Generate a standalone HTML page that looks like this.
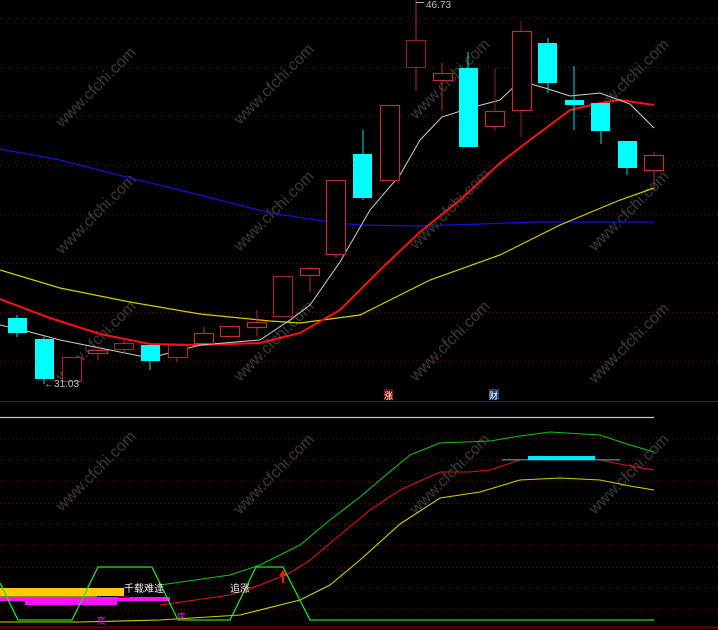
<!DOCTYPE html>
<html><head><meta charset="utf-8"><style>
html,body{margin:0;padding:0;background:#000;width:718px;height:630px;overflow:hidden}
svg{display:block}
text{font-family:"Liberation Sans","Noto Sans CJK SC",sans-serif}
</style></head><body>
<svg width="718" height="630" viewBox="0 0 718 630" xmlns="http://www.w3.org/2000/svg">
<rect width="718" height="630" fill="#000"/>
<g stroke="#7a0000" stroke-width="1" stroke-dasharray="1,3">
<line x1="0" y1="18.5" x2="718" y2="18.5"/><line x1="0" y1="67.5" x2="718" y2="67.5"/>
<line x1="0" y1="116.5" x2="718" y2="116.5"/><line x1="0" y1="165.5" x2="718" y2="165.5"/>
<line x1="0" y1="214.5" x2="718" y2="214.5"/><line x1="0" y1="263.5" x2="718" y2="263.5"/>
<line x1="0" y1="312.5" x2="718" y2="312.5"/><line x1="0" y1="361.5" x2="718" y2="361.5"/>
<line x1="0" y1="438.5" x2="718" y2="438.5"/><line x1="0" y1="460.5" x2="718" y2="460.5"/>
<line x1="0" y1="481.5" x2="718" y2="481.5"/><line x1="0" y1="503.5" x2="718" y2="503.5"/>
<line x1="0" y1="524.5" x2="718" y2="524.5"/><line x1="0" y1="545.5" x2="718" y2="545.5"/>
<line x1="0" y1="567.5" x2="718" y2="567.5"/><line x1="0" y1="588.5" x2="718" y2="588.5"/>
<line x1="0" y1="609.5" x2="718" y2="609.5"/>
</g>
<line x1="0" y1="401.5" x2="718" y2="401.5" stroke="#900000"/>
<line x1="0" y1="417.5" x2="654" y2="417.5" stroke="#c8c8c8" stroke-width="1.2"/>
<line x1="0" y1="627.5" x2="718" y2="627.5" stroke="#700000" stroke-width="2"/>

<g fill="#3c3c3c" font-size="16">
<text transform="translate(62,128) rotate(-45)">www.cfchi.com</text>
<text transform="translate(240,125) rotate(-45)">www.cfchi.com</text>
<text transform="translate(416,120) rotate(-45)">www.cfchi.com</text>
<text transform="translate(595,120) rotate(-45)">www.cfchi.com</text>
<text transform="translate(62,255) rotate(-45)">www.cfchi.com</text>
<text transform="translate(240,252) rotate(-45)">www.cfchi.com</text>
<text transform="translate(416,250) rotate(-45)">www.cfchi.com</text>
<text transform="translate(595,252) rotate(-45)">www.cfchi.com</text>
<text transform="translate(62,382) rotate(-45)">www.cfchi.com</text>
<text transform="translate(240,382) rotate(-45)">www.cfchi.com</text>
<text transform="translate(416,382) rotate(-45)">www.cfchi.com</text>
<text transform="translate(595,384) rotate(-45)">www.cfchi.com</text>
<text transform="translate(62,512) rotate(-45)">www.cfchi.com</text>
<text transform="translate(240,515) rotate(-45)">www.cfchi.com</text>
<text transform="translate(416,515) rotate(-45)">www.cfchi.com</text>
<text transform="translate(595,515) rotate(-45)">www.cfchi.com</text>
</g>

<!-- MAs -->
<polyline fill="none" stroke="#1010e0" stroke-width="1.3" points="0,149 60,160 130,178 200,195 270,213 330,222 360,225 420,226 480,224 540,222 600,222 654,222"/>
<polyline fill="none" stroke="#d0d000" stroke-width="1.2" points="0,270 60,288 130,302 200,314 270,321 300,323 360,315 400,295 430,280 500,255 560,225 620,200 654,188"/>
<polyline fill="none" stroke="#ff1010" stroke-width="2" points="0,299 50,318 100,334 150,344 200,345 260,343 300,333 340,310 380,270 420,232 460,200 500,163 530,140 570,110 600,103 620,100 654,105"/>
<polyline fill="none" stroke="#d0d0d0" stroke-width="1" points="0,325 30,332 60,340 100,348 150,358 200,345 260,340 290,320 310,305 340,262 370,210 400,175 420,140 442,117 470,108 500,100 520,81 545,88 570,96 600,93 630,104 654,128"/>

<!-- candles: wicks -->
<g stroke-width="1">
<line x1="17" y1="315" x2="17" y2="337" stroke="#00dede"/>
<line x1="44" y1="337" x2="44" y2="384" stroke="#00dede"/>
<line x1="124" y1="340" x2="124" y2="353" stroke="#b03030"/>
<line x1="98" y1="346" x2="98" y2="360" stroke="#b03030"/>
<line x1="150" y1="345" x2="150" y2="370" stroke="#00dede"/>
<line x1="177" y1="345" x2="177" y2="362" stroke="#b03030"/>
<line x1="204" y1="327" x2="204" y2="343" stroke="#b03030"/>
<line x1="257" y1="310" x2="257" y2="336" stroke="#b03030"/>
<line x1="310" y1="267" x2="310" y2="292" stroke="#b03030"/>
<line x1="336" y1="254" x2="336" y2="258" stroke="#b03030"/>
<line x1="363" y1="130" x2="363" y2="200" stroke="#00dede"/>
<line x1="416" y1="0" x2="416" y2="91" stroke="#b03030"/>
<line x1="442" y1="63" x2="442" y2="111" stroke="#b03030"/>
<line x1="468" y1="52" x2="468" y2="147" stroke="#00dede"/>
<line x1="495" y1="68" x2="495" y2="131" stroke="#8a2020"/>
<line x1="521" y1="21" x2="521" y2="137" stroke="#8a2020"/>
<line x1="548" y1="38" x2="548" y2="93" stroke="#00dede"/>
<line x1="574" y1="66" x2="574" y2="130" stroke="#00dede"/>
<line x1="601" y1="103" x2="601" y2="144" stroke="#00dede"/>
<line x1="627" y1="141" x2="627" y2="175" stroke="#00dede"/>
<line x1="654" y1="152" x2="654" y2="190" stroke="#b03030"/>
</g>
<g fill="#00ffff">
<rect x="8" y="318" width="19" height="15"/>
<rect x="35" y="339" width="19" height="40"/>
<rect x="141" y="345" width="19" height="16"/>
<rect x="353" y="154" width="19" height="44"/>
<rect x="459" y="68" width="19" height="79"/>
<rect x="538" y="43" width="19" height="40"/>
<rect x="565" y="100" width="19" height="5"/>
<rect x="591" y="103" width="19" height="28"/>
<rect x="618" y="141" width="19" height="27"/>
</g>
<g fill="#000" stroke="#c03030" stroke-width="1.2">
<rect x="62.5" y="357.5" width="19" height="24" stroke="#a02828"/>
<rect x="88.5" y="350.5" width="19" height="3"/>
<rect x="114.5" y="343.5" width="19" height="6" stroke="#a02828"/>
<rect x="168.5" y="345.5" width="19" height="12" stroke="#a02828"/>
<rect x="194.5" y="333.5" width="19" height="10"/>
<rect x="220.5" y="326.5" width="19" height="10"/>
<rect x="247.5" y="322.5" width="19" height="5"/>
<rect x="273.5" y="276.5" width="19" height="40" stroke="#a02828"/>
<rect x="300.5" y="268.5" width="19" height="7"/>
<rect x="326.5" y="180.5" width="19" height="74"/>
<rect x="380.5" y="105.5" width="19" height="75"/>
<rect x="406.5" y="40.5" width="19" height="27" stroke="#8a2020"/>
<rect x="433.5" y="73.5" width="19" height="7"/>
<rect x="485.5" y="111.5" width="19" height="15"/>
<rect x="512.5" y="31.5" width="19" height="79"/>
<rect x="644.5" y="155.5" width="19" height="15"/>
</g>
<line x1="416" y1="2.5" x2="424" y2="2.5" stroke="#aaa"/>
<text x="426" y="8" font-size="10" fill="#c0c0c0">46.73</text>
<text x="44" y="387" font-size="10" fill="#c0c0c0">←31.03</text>

<!-- labels -->
<rect x="384" y="389" width="9" height="11" fill="#800000"/>
<text x="384" y="399" font-size="9" fill="#fff">涨</text>
<rect x="489" y="389" width="10" height="11" fill="#1a3f70"/>
<text x="489" y="399" font-size="9" fill="#fff">财</text>

<!-- lower panel -->
<polyline fill="none" stroke="#10c010" stroke-width="1.1" points="160,585 230,575 260,565 300,545 330,520 360,497 380,480 410,455 440,443 490,441 520,436 550,432 600,435 630,445 654,452"/>
<polyline fill="none" stroke="#e01010" stroke-width="1.1" points="160,605 230,595 260,585 290,573 310,560 340,535 370,510 400,490 440,472 470,472 490,470 520,460 600,460 630,466 654,470"/>
<polyline fill="none" stroke="#d0d000" stroke-width="1.1" points="0,622 80,622 160,620 240,615 300,600 330,585 360,560 400,524 440,498 480,492 520,480 560,478 600,480 630,486 654,490"/>
<rect x="502" y="459" width="118" height="1.5" fill="#1a8a8a"/>
<rect x="528" y="456" width="67" height="4" fill="#00e8f0"/>
<rect x="0" y="588" width="124" height="8" fill="#ffcc00"/>
<rect x="0" y="596" width="97" height="2" fill="#a08800"/>
<rect x="0" y="597" width="170" height="4" fill="#ff10ff"/>
<rect x="25" y="601" width="92" height="4" fill="#ff10ff"/>
<rect x="118" y="596" width="12" height="2" fill="#800000"/>
<polyline fill="none" stroke="#20e020" stroke-width="1.3" points="0,583 18,620 72,620 98,567 152,567 178,620 230,620 256,567 283,567 310,620 654,620"/>
<text x="124" y="592" font-size="10" fill="#f0f0f0">千载难逢</text>
<text x="230" y="592" font-size="10" fill="#f0f0f0">追涨</text>
<path d="M283 570 L279 576 L282 576 L282 583 L284 583 L284 576 L287 576 Z" fill="#ff1010"/>
<text x="97" y="624" font-size="9" fill="#d020d0">底</text>
<text x="177" y="620" font-size="9" fill="#d020d0">底</text>
</svg>
</body></html>
